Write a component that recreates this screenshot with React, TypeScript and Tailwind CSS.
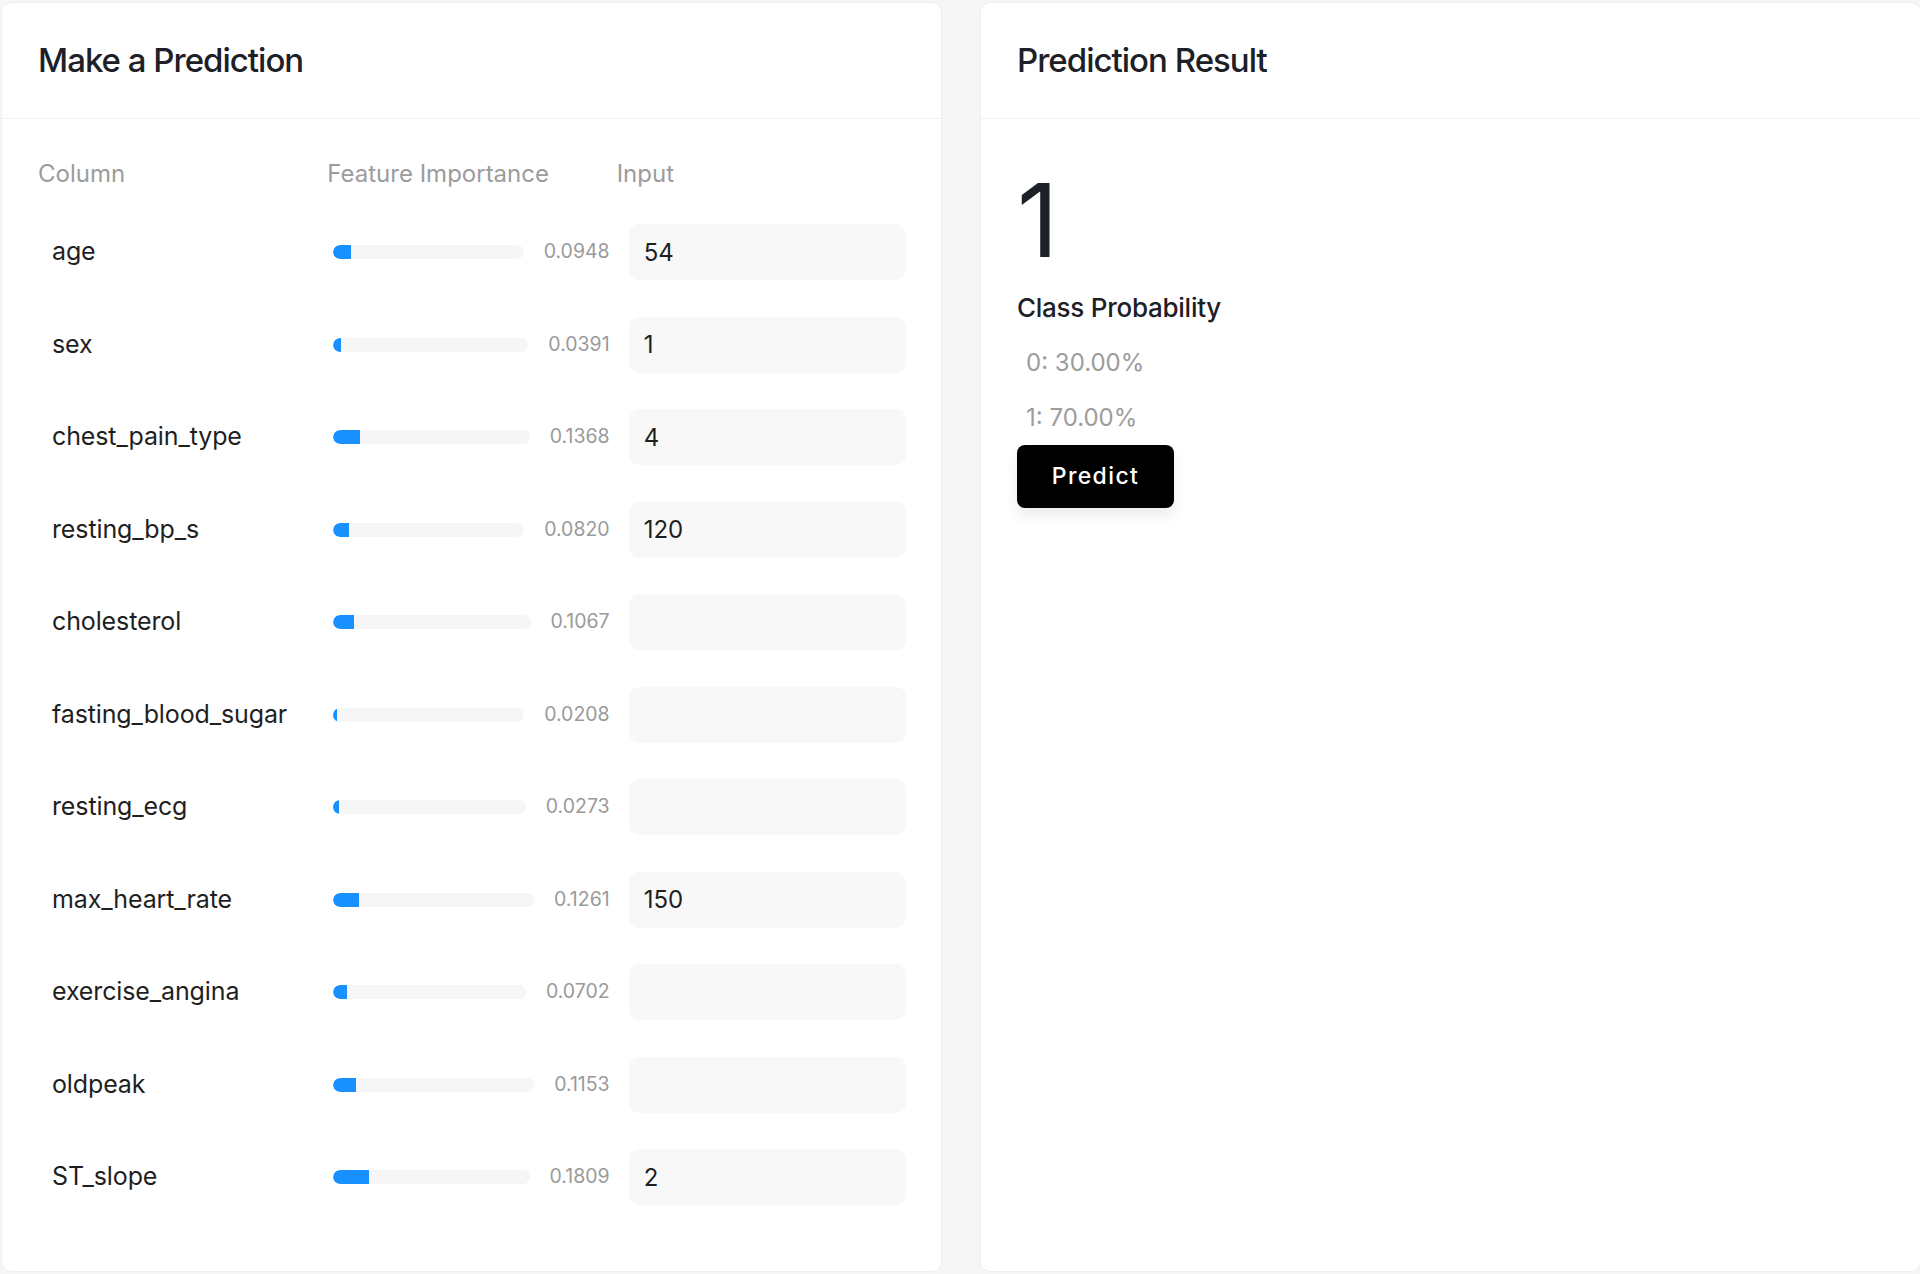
import React from 'react';

interface Feature {
  name: string;
  importance: number;
  value: string;
}

const features: Feature[] = [
  { name: 'age', importance: 0.0948, value: '54' },
  { name: 'sex', importance: 0.0391, value: '1' },
  { name: 'chest_pain_type', importance: 0.1368, value: '4' },
  { name: 'resting_bp_s', importance: 0.082, value: '120' },
  { name: 'cholesterol', importance: 0.1067, value: '' },
  { name: 'fasting_blood_sugar', importance: 0.0208, value: '' },
  { name: 'resting_ecg', importance: 0.0273, value: '' },
  { name: 'max_heart_rate', importance: 0.1261, value: '150' },
  { name: 'exercise_angina', importance: 0.0702, value: '' },
  { name: 'oldpeak', importance: 0.1153, value: '' },
  { name: 'ST_slope', importance: 0.1809, value: '2' },
];

const probabilities = [
  { label: '0', value: 0.3 },
  { label: '1', value: 0.7 },
];

const Card: React.FC<{ title: string; children: React.ReactNode }> = ({ title, children }) => (
  <div className="flex h-[1270px] w-[941px] shrink-0 flex-col rounded-[10px] border border-[#efefef] bg-white">
    <div className="flex h-[116px] shrink-0 items-center border-b border-[#f0f0f0] px-[36px]">
      <h2 className="text-[33px] leading-[1.2] font-medium tracking-[-0.03em] text-[#1d2026]">{title}</h2>
    </div>
    {children}
  </div>
);

const FeatureRow: React.FC<{ feature: Feature }> = ({ feature }) => (
  <div className="grid h-[56px] grid-cols-3 items-center">
    <div className="pl-[14px] text-[25px] tracking-[-0.005em] text-[#1f1f1f]">{feature.name}</div>
    <div className="flex items-center gap-[20px] pr-[7px] pl-[6px]">
      <div className="h-[14px] flex-1 overflow-hidden rounded-full bg-[#f6f6f6]">
        <div
          className="h-full rounded-l-full bg-[#1890ff]"
          style={{ width: `${feature.importance * 100}%` }}
        />
      </div>
      <span className="text-[19.5px] whitespace-nowrap text-[#9a9a9a]">{feature.importance.toFixed(4)}</span>
    </div>
    <div className="pl-[12px]">
      <input
        defaultValue={feature.value}
        className="h-[56px] w-full rounded-[10px] bg-[#f8f8f8] px-[15px] text-[24px] text-[#1f1f1f] outline-none"
      />
    </div>
  </div>
);

export default function App() {
  return (
    <div
      className="flex h-[1274px] w-full gap-[38px] overflow-hidden bg-[#f6f6f6] pt-[2px] pl-[1px]"
      style={{ fontFamily: 'Inter, "Noto Sans", "Liberation Sans", sans-serif' }}
    >
      <Card title="Make a Prediction">
        <div className="flex flex-col pt-[37px] pr-[35px] pl-[36px]">
          <div className="grid h-[36px] grid-cols-3 text-[24px] leading-[36px] text-[#9c9c9c]">
            <div>Column</div>
            <div>Feature Importance</div>
            <div>Input</div>
          </div>
          <div className="mt-[32px] flex flex-col gap-[36.5px]">
            {features.map((f) => (
              <FeatureRow key={f.name} feature={f} />
            ))}
          </div>
        </div>
      </Card>

      <Card title="Prediction Result">
        <div className="flex flex-col items-start px-[36px] pt-[50px]">
          <div className="text-[102px] leading-none font-normal text-[#1d2026]">1</div>
          <div className="mt-[17px] text-[26px] leading-[1.5] font-medium tracking-[-0.01em] text-[#1d2026]">
            Class Probability
          </div>
          <div className="mt-[18px] flex flex-col gap-[19px] pl-[9px]">
            {probabilities.map((p) => (
              <div key={p.label} className="text-[24px] leading-[36px] text-[#9c9c9c]">
                {p.label}: {(p.value * 100).toFixed(2)}%
              </div>
            ))}
          </div>
          <button className="mt-[9px] h-[63px] w-[157px] rounded-[8px] bg-black text-[23px] font-medium tracking-[0.06em] text-white shadow-[0_8px_14px_rgba(0,0,0,0.08)]">
            Predict
          </button>
        </div>
      </Card>
    </div>
  );
}
